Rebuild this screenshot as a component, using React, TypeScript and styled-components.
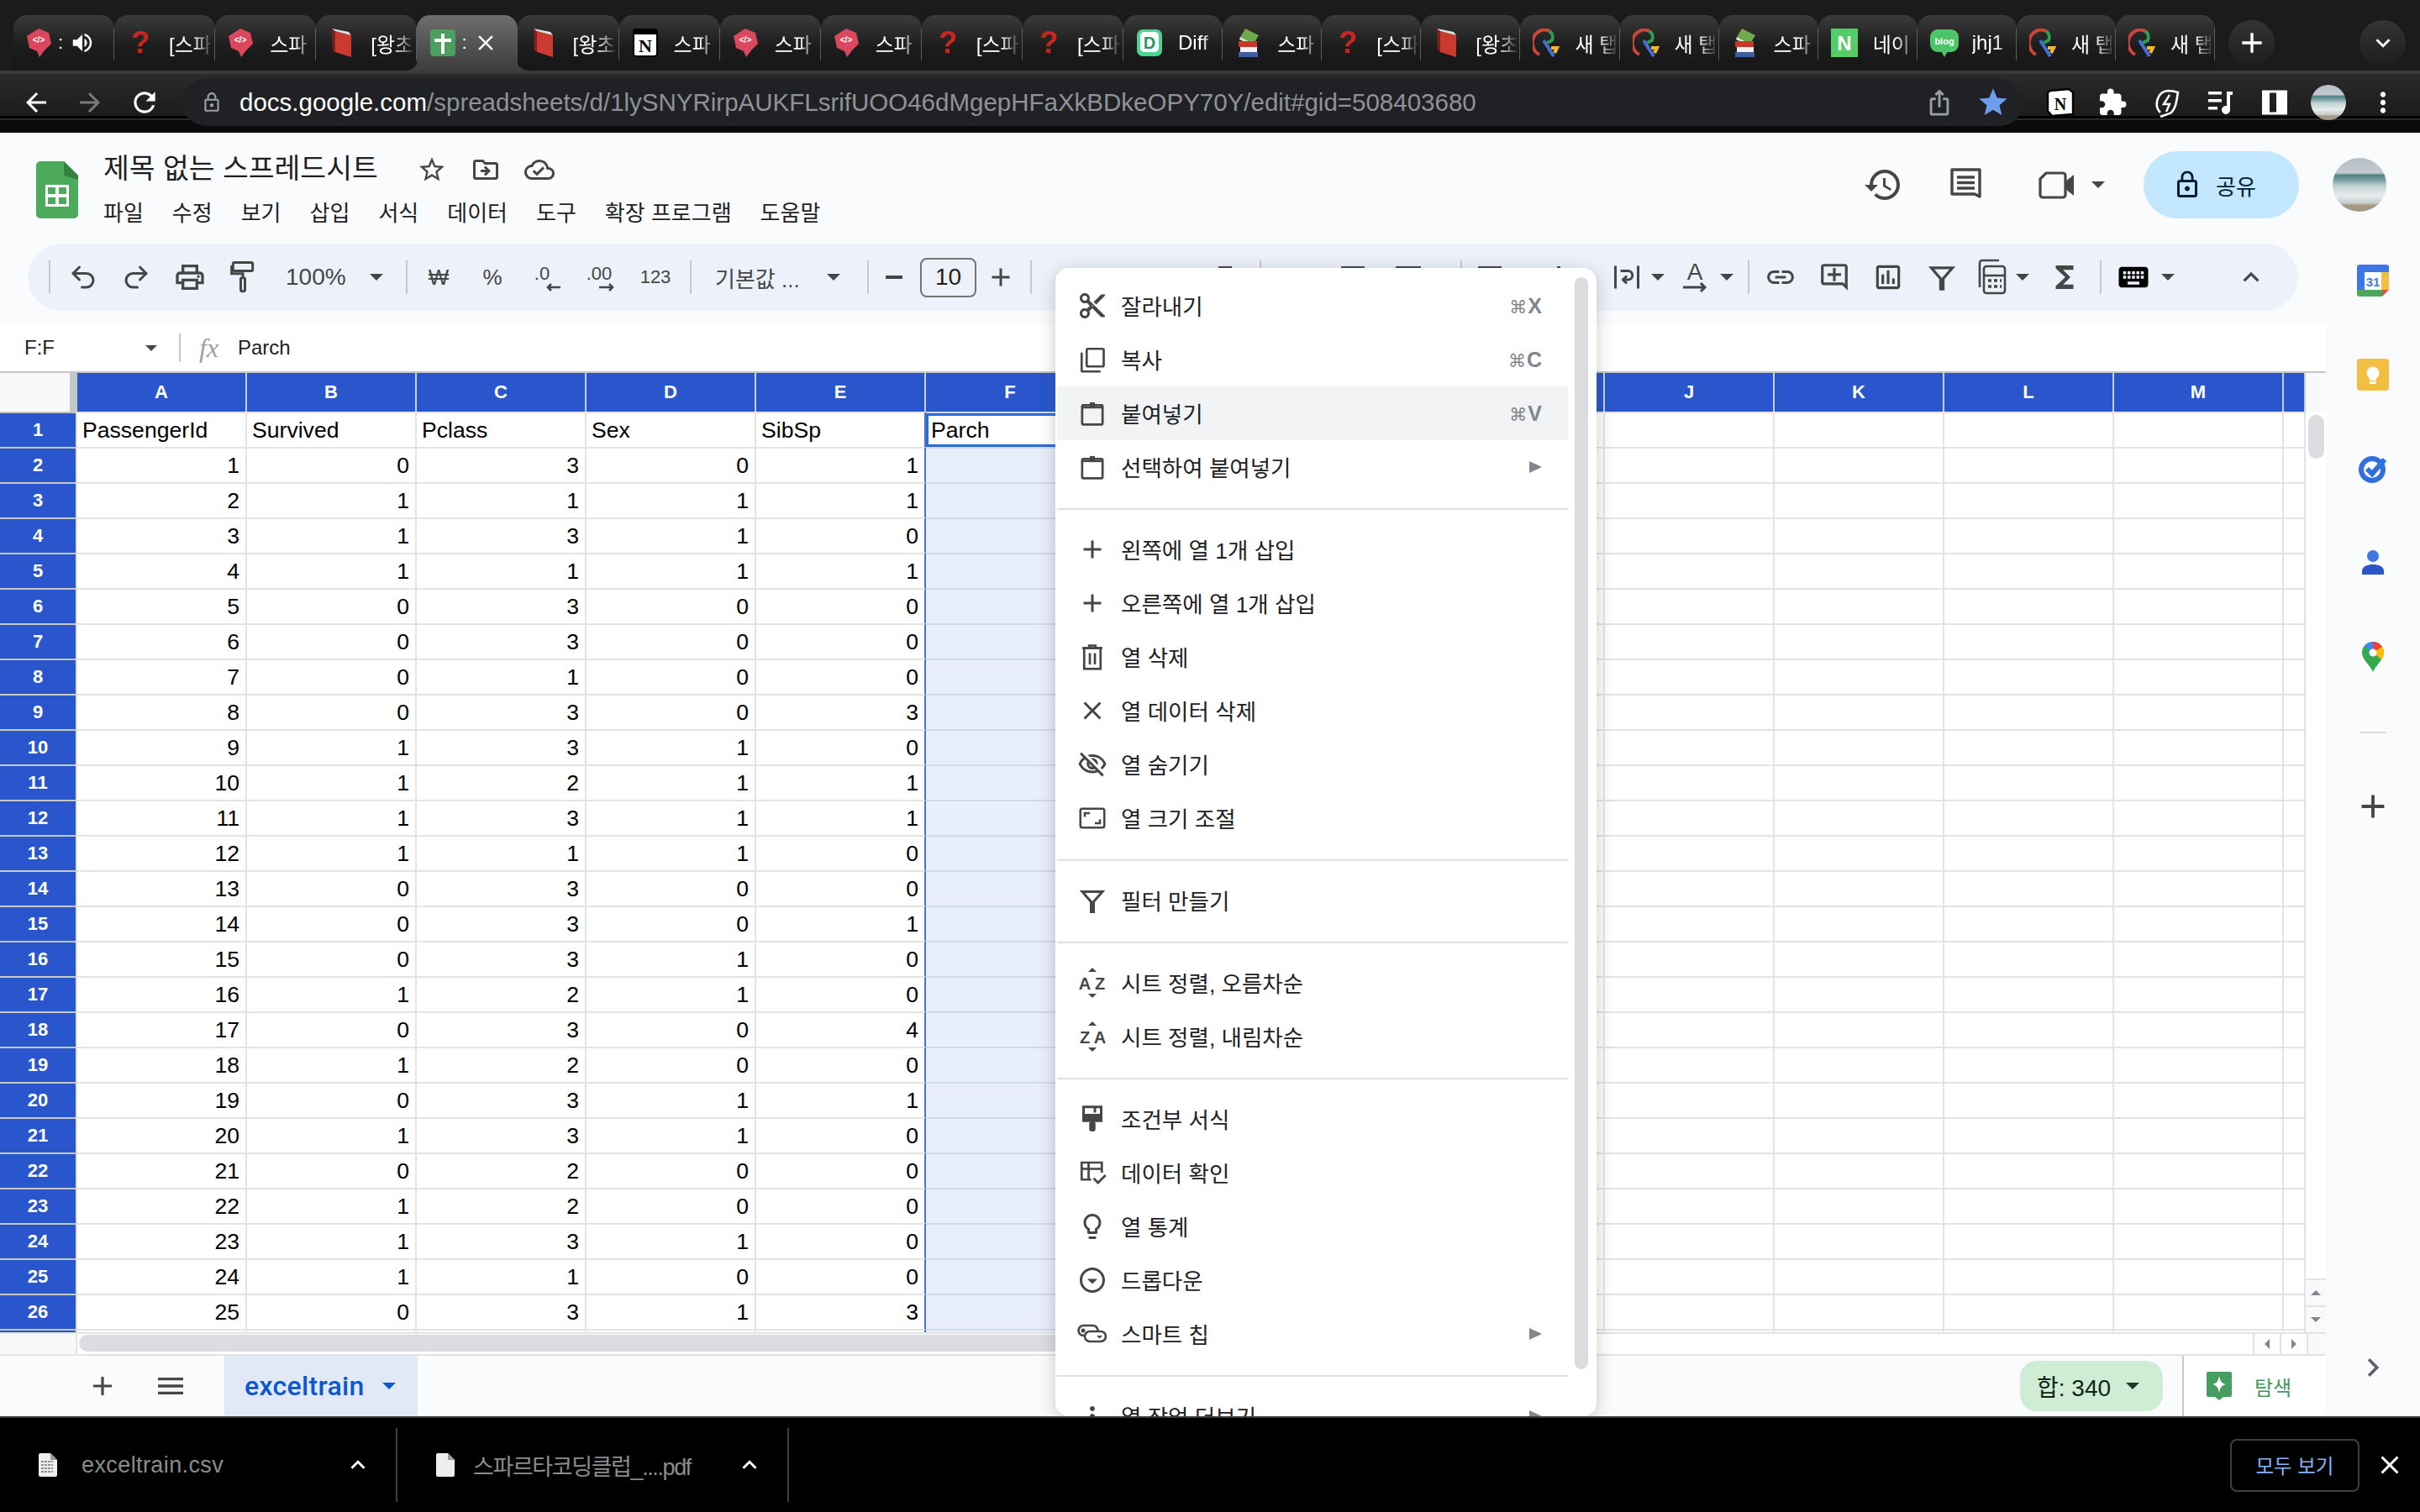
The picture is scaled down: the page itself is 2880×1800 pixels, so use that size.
import React from 'react';
import styled, { createGlobalStyle } from 'styled-components';
import { Undo2, Redo2 } from 'lucide-react';
import {
  MdAdd,
  MdArrowBack,
  MdArrowForward,
  MdClose,
  MdContentCut,
  MdExtension,
  MdFunctions,
  MdHistory,
  MdKeyboard,
  MdKeyboardArrowDown,
  MdKeyboardArrowUp,
  MdLink,
  MdLockOutline,
  MdMenu,
  MdMoreVert,
  MdOutlineAddComment,
  MdOutlineArrowDropDownCircle,
  MdOutlineCloudDone,
  MdOutlineDriveFileMove,
  MdOutlineInsertChart,
  MdOutlineLightbulb,
  MdOutlinePrint,
  MdOutlineVisibilityOff,
  MdChevronRight,
  MdRefresh,
  MdStar,
  MdStarBorder,
  MdIosShare,
  MdVolumeUp,
} from 'react-icons/md';

const FONT = '"Liberation Sans", "Noto Sans CJK KR", sans-serif';

const GlobalStyle = createGlobalStyle`
  html, body {
    margin: 0;
    padding: 0;
    background: #000;
  }
  * {
    box-sizing: border-box;
  }
  body {
    font-family: ${FONT};
  }
`;

type TabInfo = { icon: string; label: string };

const tabs: TabInfo[] = [
  { icon: 'sparta', label: '' },
  { icon: 'question', label: '[스파' },
  { icon: 'sparta', label: '스파' },
  { icon: 'book', label: '[왕초' },
  { icon: 'sheets', label: '' },
  { icon: 'book', label: '[왕초' },
  { icon: 'notion', label: '스파' },
  { icon: 'sparta', label: '스파' },
  { icon: 'sparta', label: '스파' },
  { icon: 'question', label: '[스파' },
  { icon: 'question', label: '[스파' },
  { icon: 'dify', label: 'Diff' },
  { icon: 'books', label: '스파' },
  { icon: 'question', label: '[스파' },
  { icon: 'book', label: '[왕초' },
  { icon: 'ring', label: '새 탭' },
  { icon: 'ring', label: '새 탭' },
  { icon: 'books', label: '스파' },
  { icon: 'naver', label: '네이' },
  { icon: 'blog', label: 'jhj1' },
  { icon: 'ring', label: '새 탭' },
  { icon: 'ring', label: '새 탭' },
];

const columns = ['A', 'B', 'C', 'D', 'E', 'F', 'G', 'H', 'I', 'J', 'K', 'L', 'M'];

const headerRow = ['PassengerId', 'Survived', 'Pclass', 'Sex', 'SibSp', 'Parch'];

const dataRows = [
  [1, 0, 3, 0, 1],
  [2, 1, 1, 1, 1],
  [3, 1, 3, 1, 0],
  [4, 1, 1, 1, 1],
  [5, 0, 3, 0, 0],
  [6, 0, 3, 0, 0],
  [7, 0, 1, 0, 0],
  [8, 0, 3, 0, 3],
  [9, 1, 3, 1, 0],
  [10, 1, 2, 1, 1],
  [11, 1, 3, 1, 1],
  [12, 1, 1, 1, 0],
  [13, 0, 3, 0, 0],
  [14, 0, 3, 0, 1],
  [15, 0, 3, 1, 0],
  [16, 1, 2, 1, 0],
  [17, 0, 3, 0, 4],
  [18, 1, 2, 0, 0],
  [19, 0, 3, 1, 1],
  [20, 1, 3, 1, 0],
  [21, 0, 2, 0, 0],
  [22, 1, 2, 0, 0],
  [23, 1, 3, 1, 0],
  [24, 1, 1, 0, 0],
  [25, 0, 3, 1, 3],
];

function Favicon({ kind }: { kind: string }) {
  switch (kind) {
    case 'sparta':
      return (
        <svg width="32" height="34" viewBox="0 0 32 34">
          <polygon points="15,0 27,5 30,18 22,26 16,34 13,27 4,23 1,9" fill="#d9485c" />
          <text x="15" y="17" fontSize="10" fontWeight="700" fill="#fff" textAnchor="middle" fontFamily="Liberation Sans">
            {'</>'}
          </text>
        </svg>
      );
    case 'question':
      return (
        <svg width="32" height="34" viewBox="0 0 32 34">
          <text x="16" y="29" fontSize="36" fontWeight="700" fill="#c5261f" textAnchor="middle" fontFamily="Liberation Sans">
            ?
          </text>
        </svg>
      );
    case 'book':
      return (
        <svg width="32" height="34" viewBox="0 0 32 34">
          <polygon points="8,3 27,8 27,34 8,28" fill="#cb3a2e" />
          <polygon points="4,0 8,3 8,28 5,26" fill="#7c211b" />
          <polygon points="4,0 24,4 27,8 8,3" fill="#e2e2e2" />
        </svg>
      );
    case 'sheets':
      return (
        <svg width="32" height="34" viewBox="0 0 32 34">
          <rect x="1" y="1" width="30" height="32" rx="4" fill="#4b9f60" />
          <rect x="14" y="6" width="4" height="24" fill="#fff" />
          <rect x="6" y="12" width="20" height="4" fill="#fff" />
        </svg>
      );
    case 'notion':
      return (
        <svg width="32" height="34" viewBox="0 0 32 34">
          <rect x="2" y="1" width="28" height="32" rx="3" fill="#fff" stroke="#000" strokeWidth="2" />
          <rect x="2" y="1" width="28" height="6" fill="#000" />
          <text x="16" y="28" fontSize="22" fontWeight="700" fill="#000" textAnchor="middle" fontFamily="Liberation Serif">
            N
          </text>
        </svg>
      );
    case 'dify':
      return (
        <svg width="32" height="34" viewBox="0 0 32 34">
          <rect x="1" y="1" width="30" height="32" rx="7" fill="#4fd392" />
          <rect x="5" y="4" width="22" height="24" rx="5" fill="#fff" />
          <text x="16" y="24" fontSize="20" fontWeight="700" fill="#1d9c63" textAnchor="middle" fontFamily="Liberation Sans">
            D
          </text>
        </svg>
      );
    case 'books':
      return (
        <svg width="32" height="34" viewBox="0 0 32 34">
          <polygon points="12,0 28,8 22,18 6,10" fill="#6fa84f" />
          <polygon points="6,10 22,18 20,20 5,13" fill="#d8e6c8" />
          <rect x="4" y="15" width="22" height="7" fill="#c8372c" />
          <rect x="6" y="22" width="20" height="6" fill="#f2f2f2" />
          <rect x="4" y="28" width="23" height="6" fill="#3d5f9e" />
        </svg>
      );
    case 'ring':
      return (
        <svg width="32" height="34" viewBox="0 0 32 34" fill="none">
          <path d="M20 3 A9 9 0 0 1 23 14 L17 17" stroke="#2e9e4f" strokeWidth="4" />
          <path d="M20 3 A13 14 0 0 0 8 31" stroke="#d04437" strokeWidth="4" />
          <path d="M13 14 L25 33" stroke="#3f6fd8" strokeWidth="4" />
          <path d="M22 23 h7 l-3 6" stroke="#f2b632" strokeWidth="4" />
        </svg>
      );
    case 'naver':
      return (
        <svg width="32" height="34" viewBox="0 0 32 34">
          <rect x="0" y="0" width="32" height="34" fill="#54cd69" />
          <text x="16" y="26" fontSize="24" fontWeight="700" fill="#fff" textAnchor="middle" fontFamily="Liberation Sans">
            N
          </text>
        </svg>
      );
    default:
      return (
        <svg width="34" height="34" viewBox="0 0 34 34">
          <rect x="0" y="1" width="34" height="27" rx="9" fill="#4dc468" />
          <polygon points="13,27 21,27 17,34" fill="#4dc468" />
          <text x="17" y="19" fontSize="11" fontWeight="700" fill="#fff" textAnchor="middle" fontFamily="Liberation Sans">
            blog
          </text>
        </svg>
      );
  }
}

function SheetsLogo() {
  return (
    <svg width="50" height="68" viewBox="0 0 50 68">
      <path d="M5 0H33L50 17V63a5 5 0 0 1-5 5H5a5 5 0 0 1-5-5V5a5 5 0 0 1 5-5z" fill="#4caa5c" />
      <path d="M33 0L50 17V22L33 17z" fill="#33803f" />
      <rect x="11" y="28" width="28" height="26" fill="#fff" />
      <rect x="14" y="31" width="9" height="8" fill="#4caa5c" />
      <rect x="27" y="31" width="9" height="8" fill="#4caa5c" />
      <rect x="14" y="43" width="9" height="8" fill="#4caa5c" />
      <rect x="27" y="43" width="9" height="8" fill="#4caa5c" />
    </svg>
  );
}

function PaintIcon({ size = 40 }: { size?: number }) {
  return (
    <svg width={size} height={size} viewBox="0 0 24 24" fill="none" stroke="#444746" strokeWidth="1.8">
      <rect x="5" y="1.5" width="14" height="6" rx="1" />
      <path d="M5 4.5H4v5h8v3" />
      <rect x="10.5" y="12.5" width="3" height="9.5" rx="1" />
    </svg>
  );
}

function ClipboardIcon() {
  return (
    <svg width="36" height="36" viewBox="0 0 24 24" fill="none" stroke="#444746" strokeWidth="1.8">
      <rect x="3.9" y="5.5" width="16.2" height="15.4" rx="1" />
      <path d="M4 7.2h16" strokeWidth="1.8" />
      <rect x="10" y="3.3" width="4" height="3.5" fill="#444746" stroke="none" />
    </svg>
  );
}

function CopyIcon() {
  return (
    <svg width="36" height="36" viewBox="0 0 24 24" fill="none" stroke="#444746" strokeWidth="1.8">
      <rect x="7.5" y="3.5" width="13.5" height="14" rx="1" />
      <path d="M3.5 6.5v14a1 1 0 0 0 1 1h14" />
    </svg>
  );
}

function TrashIcon() {
  return (
    <svg width="36" height="36" viewBox="0 0 24 24" fill="none" stroke="#444746" strokeWidth="1.8">
      <path d="M4 5h16M9.5 5V3h5v2" />
      <rect x="5.5" y="5" width="13" height="16.5" />
      <path d="M10 9v9M14 9v9" />
    </svg>
  );
}

function ResizeIcon() {
  return (
    <svg width="36" height="36" viewBox="0 0 24 24" fill="none" stroke="#444746" strokeWidth="1.7">
      <rect x="2.5" y="4.5" width="19" height="15" rx="1.5" />
      <path d="M6 11V8h4M18 13v3h-4" />
    </svg>
  );
}

function FunnelIcon({ size = 36 }: { size?: number }) {
  return (
    <svg width={size} height={size} viewBox="0 0 24 24" fill="none" stroke="#444746" strokeWidth="2">
      <path d="M4 5h16l-7 8v8h-2v-8z" />
    </svg>
  );
}

function SortIcon({ first, second }: { first: string; second: string }) {
  return (
    <svg width="36" height="36" viewBox="0 0 36 36">
      <polygon points="18,0 23,5 13,5" fill="#444746" />
      <polygon points="18,36 23,31 13,31" fill="#444746" />
      <text x="9" y="26" fontSize="20" fontWeight="700" fill="#444746" textAnchor="middle" fontFamily="Liberation Sans">
        {first}
      </text>
      <text x="27" y="26" fontSize="20" fontWeight="700" fill="#444746" textAnchor="middle" fontFamily="Liberation Sans">
        {second}
      </text>
    </svg>
  );
}

function ValidationIcon() {
  return (
    <svg width="36" height="36" viewBox="0 0 24 24" fill="none" stroke="#444746" strokeWidth="1.8">
      <path d="M11 17.5H3.5V4h16v8M3.5 9h16M9 4v13" />
      <path d="M13 16.5l3.5 3.5 6-6" />
    </svg>
  );
}

function ChipIcon() {
  return (
    <svg width="36" height="36" viewBox="0 0 36 36" fill="none" stroke="#444746" strokeWidth="2.6">
      <rect x="1.5" y="8" width="23" height="12" rx="6" />
      <rect x="9" y="15" width="25" height="12" rx="6" fill="#fff" />
      <circle cx="7" cy="14" r="2.5" fill="#444746" stroke="none" />
      <polygon points="23,20 30,20 26.5,23.5" fill="#444746" stroke="none" />
    </svg>
  );
}

function RollerIcon() {
  return (
    <svg width="36" height="36" viewBox="0 0 24 24">
      <path d="M5 2.5h14v11H5z" fill="none" stroke="#444746" strokeWidth="2" />
      <rect x="5" y="8" width="14" height="5.5" fill="#444746" />
      <rect x="13" y="3" width="2" height="4" fill="#444746" />
      <rect x="9.5" y="14" width="5" height="8" rx="2" fill="#444746" />
    </svg>
  );
}

function DecimalIcon({ text, arrow }: { text: string; arrow: string }) {
  return (
    <svg width="44" height="44" viewBox="0 0 44 44" fill="none">
      <text x="22" y="25" fontSize="22" fill="#444746" textAnchor="middle" fontFamily="Liberation Sans">
        {text}
      </text>
      <path d={arrow} stroke="#444746" strokeWidth="2.5" />
    </svg>
  );
}

function WrapIcon() {
  return (
    <svg width="36" height="36" viewBox="0 0 24 24" fill="none" stroke="#444746" strokeWidth="2">
      <path d="M3 3v18M21 3v18" />
      <path d="M7 7h6a3 3 0 0 1 0 7H9m3-3l-3 3 3 3" />
    </svg>
  );
}

function TextColorIcon() {
  return (
    <svg width="36" height="44" viewBox="0 0 36 44" fill="none">
      <text x="17" y="25" fontSize="28" fill="#444746" textAnchor="middle" fontFamily="Liberation Sans">
        A
      </text>
      <path d="M3 34h26m-5-5l5 5-5 5" stroke="#444746" strokeWidth="3" />
    </svg>
  );
}

function CalcIcon() {
  return (
    <svg width="36" height="44" viewBox="0 0 36 44" fill="none" stroke="#444746" strokeWidth="2.6">
      <path d="M4 34V5a3 3 0 0 1 3-3h20" />
      <rect x="9" y="9" width="25" height="32" rx="3" />
      <path d="M9 20h25" />
      <path d="M14 26h4M21 26h4M28 26h2M14 33h4M21 33h4M28 33h2" strokeWidth="3.4" />
    </svg>
  );
}

function CommentListIcon() {
  return (
    <svg width="44" height="44" viewBox="0 0 44 44" fill="none" stroke="#444746" strokeWidth="3.4">
      <path d="M5 4h33v32l-6-3H5z" strokeLinejoin="round" />
      <path d="M11 13h21M11 19.5h21M11 26h21" />
    </svg>
  );
}

function CameraIcon() {
  return (
    <svg width="44" height="44" viewBox="0 0 44 44">
      <path d="M9 8h20a3 3 0 0 1 3 3v23a3 3 0 0 1-3 3H5a3 3 0 0 1-3-3V15z" fill="none" stroke="#444746" strokeWidth="3.2" />
      <polygon points="32,18 42,10 42,35 32,27" fill="#444746" />
    </svg>
  );
}

function NotionMark() {
  return (
    <svg width="34" height="34" viewBox="0 0 34 34">
      <path d="M5 3l22-2 5 4v26l-25 2-5-6V5z" fill="#fff" stroke="#000" strokeWidth="2.4" />
      <text x="17" y="26" fontSize="20" fontWeight="700" fill="#000" textAnchor="middle" fontFamily="Liberation Serif">
        N
      </text>
    </svg>
  );
}

function BoltMark() {
  return (
    <svg width="34" height="36" viewBox="0 0 34 36" fill="none" stroke="#fff" strokeWidth="2.6">
      <path d="M8 30c-8-8-4-25 9-26 5 0 9 1 12 2-2 10-2 18-8 24-3 2-9 3-13 5" />
      <path d="M19 9l-7 11h7l-4 9" strokeWidth="2.4" />
    </svg>
  );
}

function QueueMark() {
  return (
    <svg width="32" height="32" viewBox="0 0 32 32">
      <rect x="1" y="3" width="16" height="3.5" fill="#fff" />
      <rect x="1" y="12" width="16" height="3.5" fill="#fff" />
      <rect x="1" y="21" width="11" height="3.5" fill="#fff" />
      <path d="M23 3h7v4h-3v18a5 5 0 1 1-4-5z" fill="#fff" />
    </svg>
  );
}

function PanelMark() {
  return (
    <svg width="30" height="30" viewBox="0 0 30 30">
      <path d="M1 2h28v26H1z" fill="none" stroke="#fff" strokeWidth="3" />
      <rect x="17" y="2" width="12" height="26" fill="#fff" />
      <rect x="1" y="2" width="8" height="26" fill="#fff" />
    </svg>
  );
}

function CalendarApp() {
  return (
    <svg width="38" height="38" viewBox="0 0 38 38">
      <rect x="0" y="0" width="38" height="38" rx="3" fill="#fff" />
      <path d="M3 0h32a3 3 0 0 1 3 3v6H0V3a3 3 0 0 1 3-3z" fill="#3f78e5" />
      <rect x="0" y="9" width="9" height="21" fill="#3f78e5" />
      <rect x="29" y="9" width="9" height="21" fill="#f2bf42" />
      <path d="M0 30h30v8H3a3 3 0 0 1-3-3z" fill="#4fa55a" />
      <polygon points="30,30 38,30 30,38" fill="#e1503f" />
      <text x="19" y="26" fontSize="15" fontWeight="700" fill="#3f78e5" textAnchor="middle" fontFamily="Liberation Sans">
        31
      </text>
    </svg>
  );
}

function KeepApp() {
  return (
    <svg width="38" height="38" viewBox="0 0 38 38">
      <rect width="38" height="38" rx="4" fill="#f2bf42" />
      <circle cx="19" cy="17" r="7.5" fill="#fff" />
      <rect x="15" y="22" width="8" height="4" fill="#fff" />
      <rect x="15" y="27" width="8" height="3" fill="#fff" />
    </svg>
  );
}

function TasksApp() {
  return (
    <svg width="38" height="38" viewBox="0 0 38 38" fill="none">
      <circle cx="18" cy="20" r="13" stroke="#2f6fe0" strokeWidth="6" />
      <path d="M12 19l6 6L33 8" stroke="#2f6fe0" strokeWidth="6" />
    </svg>
  );
}

function ContactsApp() {
  return (
    <svg width="38" height="38" viewBox="0 0 38 38">
      <circle cx="19" cy="11" r="7" fill="#3f78e5" />
      <path d="M6 33v-4c0-6 7-8 13-8s13 2 13 8v4z" fill="#2a56c6" />
    </svg>
  );
}

function MapsApp() {
  return (
    <svg width="38" height="38" viewBox="0 0 38 38">
      <path d="M19 1a13 13 0 0 1 13 13c0 8-9 14-13 23C15 28 6 22 6 14A13 13 0 0 1 19 1z" fill="#34a853" />
      <path d="M19 1a13 13 0 0 0-10 5l10 8z" fill="#4285f4" />
      <path d="M19 1a13 13 0 0 1 11 6l-11 7z" fill="#ea4335" />
      <path d="M30 7a13 13 0 0 1 2 7c0 3-1 5-3 8l-10-8z" fill="#fbbc04" />
      <circle cx="19" cy="14" r="4.5" fill="#fff" />
    </svg>
  );
}

function ExploreIcon() {
  return (
    <svg width="30" height="34" viewBox="0 0 30 34">
      <path d="M2 0h26a2 2 0 0 1 2 2v26a2 2 0 0 1-2 2h-8l-5 4-5-4H2a2 2 0 0 1-2-2V2a2 2 0 0 1 2-2z" fill="#479c5f" />
      <path d="M15 5c1 6 3 9 8 10-5 1-7 4-8 10-1-6-3-9-8-10 5-1 7-4 8-10z" fill="#fff" />
    </svg>
  );
}

function FileIcon({ lines }: { lines?: boolean }) {
  return (
    <svg width="22" height="28" viewBox="0 0 22 28">
      <path d="M2 0h12l8 8v18a2 2 0 0 1-2 2H2a2 2 0 0 1-2-2V2a2 2 0 0 1 2-2z" fill="#eeeeee" />
      <path d="M14 0l8 8h-8z" fill="#9a9a9a" />
      {lines && <path d="M3 10h14M3 14h14M3 18h14M3 22h14" stroke="#8e8e8e" strokeWidth="2" strokeDasharray="3 1" />}
    </svg>
  );
}

type MenuItemInfo = {
  icon: React.ReactNode;
  label: string;
  hint?: string;
  sub?: boolean;
  hover?: boolean;
};

const menuGroups: MenuItemInfo[][] = [
  [
    { icon: <MdContentCut size={36} />, label: '잘라내기', hint: 'X' },
    { icon: <CopyIcon />, label: '복사', hint: 'C' },
    { icon: <ClipboardIcon />, label: '붙여넣기', hint: 'V', hover: true },
    { icon: <ClipboardIcon />, label: '선택하여 붙여넣기', sub: true },
  ],
  [
    { icon: <MdAdd size={36} />, label: '왼쪽에 열 1개 삽입' },
    { icon: <MdAdd size={36} />, label: '오른쪽에 열 1개 삽입' },
    { icon: <TrashIcon />, label: '열 삭제' },
    { icon: <MdClose size={36} />, label: '열 데이터 삭제' },
    { icon: <MdOutlineVisibilityOff size={36} />, label: '열 숨기기' },
    { icon: <ResizeIcon />, label: '열 크기 조절' },
  ],
  [{ icon: <FunnelIcon />, label: '필터 만들기' }],
  [
    { icon: <SortIcon first="A" second="Z" />, label: '시트 정렬, 오름차순' },
    { icon: <SortIcon first="Z" second="A" />, label: '시트 정렬, 내림차순' },
  ],
  [
    { icon: <RollerIcon />, label: '조건부 서식' },
    { icon: <ValidationIcon />, label: '데이터 확인' },
    { icon: <MdOutlineLightbulb size={36} />, label: '열 통계' },
    { icon: <MdOutlineArrowDropDownCircle size={36} />, label: '드롭다운' },
    { icon: <ChipIcon />, label: '스마트 칩', sub: true },
  ],
  [{ icon: <MdMoreVert size={36} />, label: '열 작업 더보기', sub: true }],
];

export default function App() {
  return (
    <Screen>
      <GlobalStyle />
      <Chrome>
        <TabStrip>
          {tabs.map((tab, index) => (
            <Tab key={index} $active={index === 4} $wide={index < 11}>
              <TabIcon>
                <Favicon kind={tab.icon} />
              </TabIcon>
              {index === 0 && (
                <>
                  <TabDots>:</TabDots>
                  <MdVolumeUp size={30} color="#fff" />
                </>
              )}
              {index === 4 && (
                <>
                  <TabDots>:</TabDots>
                  <TabClose>
                    <MdClose size={30} color="#fff" />
                  </TabClose>
                </>
              )}
              {tab.label && <TabLabel>{tab.label}</TabLabel>}
            </Tab>
          ))}
          <RoundButton $ml={16}>
            <MdAdd size={40} color="#fff" />
          </RoundButton>
          <RoundButton $ml={101}>
            <MdKeyboardArrowDown size={34} color="#fff" />
          </RoundButton>
        </TabStrip>
        <UrlRow>
          <Slot $w={56} $ml={15}>
            <MdArrowBack size={36} color="#fff" />
          </Slot>
          <Slot $w={56} $ml={8}>
            <MdArrowForward size={36} color="#77797c" />
          </Slot>
          <Slot $w={56} $ml={9}>
            <MdRefresh size={38} color="#fff" />
          </Slot>
          <AddressBar>
            <Slot $w={26}>
              <MdLockOutline size={26} color="#9aa0a6" />
            </Slot>
            <UrlText>
              <strong>docs.google.com</strong>
              /spreadsheets/d/1lySNYRirpAUKFLsrifUOO46dMgepHFaXkBDkeOPY70Y/edit#gid=508403680
            </UrlText>
            <Slot $w={44} $auto>
              <MdIosShare size={34} color="#9aa0a6" />
            </Slot>
            <Slot $w={44} $ml={20}>
              <MdStar size={40} color="#6d9eeb" />
            </Slot>
          </AddressBar>
          <Slot $w={48} $ml={20}>
            <NotionMark />
          </Slot>
          <Slot $w={48} $ml={14}>
            <MdExtension size={36} color="#fff" />
          </Slot>
          <Slot $w={48} $ml={18}>
            <BoltMark />
          </Slot>
          <Slot $w={48} $ml={15}>
            <QueueMark />
          </Slot>
          <Slot $w={48} $ml={16}>
            <PanelMark />
          </Slot>
          <Avatar $size={42} $ml={19} />
          <Slot $w={48} $ml={20}>
            <MdMoreVert size={38} color="#fff" />
          </Slot>
        </UrlRow>
      </Chrome>

      <Page>
        <DocHeader>
          <SheetsLogo />
          <TitleBlock>
            <TitleRow>
              <DocTitle>제목 없는 스프레드시트</DocTitle>
              <Slot $w={48} $ml={41}>
                <MdStarBorder size={36} color="#444746" />
              </Slot>
              <Slot $w={48} $ml={16}>
                <MdOutlineDriveFileMove size={36} color="#444746" />
              </Slot>
              <Slot $w={48} $ml={16}>
                <MdOutlineCloudDone size={36} color="#444746" />
              </Slot>
            </TitleRow>
            <MenuBar>
              {['파일', '수정', '보기', '삽입', '서식', '데이터', '도구', '확장 프로그램', '도움말'].map((m) => (
                <span key={m}>{m}</span>
              ))}
            </MenuBar>
          </TitleBlock>
          <HeaderActions>
            <Slot $w={64}>
              <MdHistory size={48} color="#444746" />
            </Slot>
            <Slot $w={64} $ml={35}>
              <CommentListIcon />
            </Slot>
            <Slot $w={64} $ml={44}>
              <CameraIcon />
            </Slot>
            <Slot $w={34}>
              <Caret $size={8} />
            </Slot>
            <ShareButton>
              <MdLockOutline size={36} />
              공유
            </ShareButton>
            <Avatar $size={64} $ml={40} />
          </HeaderActions>
        </DocHeader>

        <Body>
          <Main>
            <Toolbar>
              <ToolSep />
              <Slot $w={63.5} $ml={7}>
                <Undo2 size={36} color="#444746" strokeWidth={2} />
              </Slot>
              <Slot $w={63.5}>
                <Redo2 size={36} color="#444746" strokeWidth={2} />
              </Slot>
              <Slot $w={63.5}>
                <MdOutlinePrint size={40} color="#444746" />
              </Slot>
              <Slot $w={63.5}>
                <PaintIcon />
              </Slot>
              <ToolText $w={73} $ml={19} $size={28}>
                100%
              </ToolText>
              <Slot $w={70}>
                <Caret $size={8} />
              </Slot>
              <ToolSep />
              <ToolText $w={64} $ml={5} $size={26} $center>
                ₩
              </ToolText>
              <ToolText $w={64} $size={26} $center>
                %
              </ToolText>
              <Slot $w={54}>
                <DecimalIcon text=".0" arrow="M44 34H29m4-4l-4 4 4 4" />
              </Slot>
              <Slot $w={82}>
                <DecimalIcon text=".00" arrow="M22 34h16m-4-4l4 4-4 4" />
              </Slot>
              <ToolText $w={52} $size={22} $center>
                123
              </ToolText>
              <Spacer $w={15} />
              <ToolSep />
              <ToolText $w={101} $ml={28} $size={26}>
                기본값 ...
              </ToolText>
              <Slot $w={80}>
                <Caret $size={8} />
              </Slot>
              <ToolSep />
              <Slot $w={60}>
                <MinusBar />
              </Slot>
              <FontSizeBox>10</FontSizeBox>
              <Slot $w={58}>
                <MdAdd size={36} color="#444746" />
              </Slot>
              <Spacer $w={6} />
              <ToolSep />
              <Spacer $w={222} />
              <HiddenStub $w={16} />
              <Spacer $w={33} />
              <ToolSep />
              <Spacer $w={95} />
              <HiddenStub $w={28} />
              <Spacer $w={37} />
              <HiddenStub $w={30} />
              <Spacer $w={47} />
              <ToolSep />
              <Spacer $w={19} />
              <HiddenStub $w={28} />
              <Spacer $w={66} />
              <HiddenStub $w={4} />
              <Spacer $w={57} />
              <Slot $w={44}>
                <WrapIcon />
              </Slot>
              <Slot $w={30}>
                <Caret $size={8} />
              </Slot>
              <Slot $w={44} $ml={8}>
                <TextColorIcon />
              </Slot>
              <Slot $w={30}>
                <Caret $size={8} />
              </Slot>
              <Spacer $w={10} />
              <ToolSep />
              <Slot $w={64} $ml={5}>
                <MdLink size={38} color="#444746" />
              </Slot>
              <Slot $w={64}>
                <MdOutlineAddComment size={38} color="#444746" />
              </Slot>
              <Slot $w={64}>
                <MdOutlineInsertChart size={38} color="#444746" />
              </Slot>
              <Slot $w={64}>
                <FunnelIcon size={38} />
              </Slot>
              <Slot $w={50} $ml={2}>
                <CalcIcon />
              </Slot>
              <Slot $w={24}>
                <Caret $size={8} />
              </Slot>
              <Slot $w={64} $ml={6}>
                <MdFunctions size={42} color="#444746" />
              </Slot>
              <Spacer $w={10} />
              <ToolSep />
              <Slot $w={48} $ml={14}>
                <MdKeyboard size={42} color="#000" />
              </Slot>
              <Slot $w={34}>
                <Caret $size={8} />
              </Slot>
              <Slot $w={48} $ml={58}>
                <MdKeyboardArrowUp size={38} color="#444746" />
              </Slot>
            </Toolbar>

            <FormulaBar>
              <NameBox>F:F</NameBox>
              <Slot $w={34} $ml={101}>
                <Caret $size={7} />
              </Slot>
              <FormulaSep />
              <FxMark>fx</FxMark>
              <FormulaValue>Parch</FormulaValue>
            </FormulaBar>

            <GridArea>
              <Sheet>
                <Corner />
                {columns.map((c) => (
                  <ColHead key={c}>{c}</ColHead>
                ))}
                <ColHead />
                {Array.from({ length: 26 }).map((_, r) => {
                  const row = r === 0 ? headerRow : (dataRows[r - 1] as (string | number)[]);
                  return (
                    <React.Fragment key={r}>
                      <RowHead>{r + 1}</RowHead>
                      {columns.map((c, ci) => {
                        const v = ci < 5 ? row[ci] : undefined;
                        return (
                          <Cell
                            key={c}
                            $num={r > 0}
                            $sel={ci === 5}
                            $active={r === 0 && ci === 5}
                            $beforeSel={ci === 4}
                          >
                            {r === 0 && ci === 5 ? 'Parch' : v}
                          </Cell>
                        );
                      })}
                      <Cell />
                    </React.Fragment>
                  );
                })}
                <RowHead />
                {columns.map((c, ci) => (
                  <Cell key={c} $sel={ci === 5} $beforeSel={ci === 4} />
                ))}
                <Cell />
              </Sheet>
              <VScroll>
                <VScrollHead />
                <VThumb />
                <VArrow $top>
                  <Caret $size={6} $dir="up" $color="#80868b" />
                </VArrow>
                <VArrow>
                  <Caret $size={6} $color="#80868b" />
                </VArrow>
              </VScroll>
            </GridArea>

            <HScroll>
              <HScrollCorner />
              <HThumb />
              <HArrow $first>
                <Caret $size={6} $dir="left" $color="#80868b" />
              </HArrow>
              <HArrow>
                <Caret $size={6} $dir="right" $color="#80868b" />
              </HArrow>
              <HScrollEnd />
            </HScroll>

            <SheetBar>
              <Slot $w={44} $ml={100}>
                <MdAdd size={38} color="#444746" />
              </Slot>
              <Slot $w={44} $ml={37}>
                <MdMenu size={40} color="#444746" />
              </Slot>
              <SheetTab>
                exceltrain
                <Caret $size={8} $color="#0b57d0" />
              </SheetTab>
              <SumPill>
                합: 340
                <Caret $size={8} $color="#1e3a26" />
              </SumPill>
              <ExploreBox>
                <ExploreIcon />
                <ExploreText>탐색</ExploreText>
              </ExploreBox>
            </SheetBar>
          </Main>

          <SidePanel>
            <CalendarApp />
            <KeepApp />
            <TasksApp />
            <ContactsApp />
            <MapsApp />
            <SideRule />
            <SidePlus>
              <MdAdd size={46} color="#444746" />
            </SidePlus>
            <SideChevron>
              <MdChevronRight size={44} color="#5f6368" />
            </SideChevron>
          </SidePanel>
        </Body>

        <ContextMenu>
          <MenuThumb />
          {menuGroups.map((group, gi) => (
            <MenuGroup key={gi} $first={gi === 0}>
              {group.map((item) => (
                <MenuRow key={item.label} $hover={item.hover}>
                  <MenuIcon>{item.icon}</MenuIcon>
                  <MenuLabel>{item.label}</MenuLabel>
                  {item.hint && (
                    <Shortcut>
                      <span>⌘</span>
                      {item.hint}
                    </Shortcut>
                  )}
                  {item.sub && <SubArrow />}
                </MenuRow>
              ))}
            </MenuGroup>
          ))}
        </ContextMenu>
      </Page>

      <DownloadBar>
        <DownloadItem $w={473}>
          <FileIcon lines />
          <DownloadName>exceltrain.csv</DownloadName>
          <DownloadCaret>
            <MdKeyboardArrowUp size={34} color="#fff" />
          </DownloadCaret>
        </DownloadItem>
        <DownloadItem $w={466}>
          <FileIcon />
          <DownloadName $tight>스파르타코딩클럽_....pdf</DownloadName>
          <DownloadCaret>
            <MdKeyboardArrowUp size={34} color="#fff" />
          </DownloadCaret>
        </DownloadItem>
        <ShowAll>모두 보기</ShowAll>
        <Slot $w={48} $ml={12}>
          <MdClose size={36} color="#fff" />
        </Slot>
      </DownloadBar>
    </Screen>
  );
}

const Screen = styled.div`
  width: 2880px;
  height: 1800px;
  display: flex;
  flex-direction: column;
  overflow: hidden;
`;

const Slot = styled.div<{ $w: number; $ml?: number; $auto?: boolean }>`
  flex: none;
  width: ${(p) => p.$w}px;
  margin-left: ${(p) => (p.$auto ? 'auto' : `${p.$ml || 0}px`)};
  display: flex;
  align-items: center;
  justify-content: center;
`;

const Spacer = styled.div<{ $w: number }>`
  flex: none;
  width: ${(p) => p.$w}px;
`;

const Caret = styled.span<{ $size: number; $color?: string; $dir?: 'up' | 'left' | 'right' }>`
  display: inline-block;
  width: 0;
  height: 0;
  flex: none;
  border-style: solid;
  border-color: transparent;
  ${(p) => {
    const c = p.$color || '#444746';
    const s = p.$size;
    if (p.$dir === 'up') return `border-width: 0 ${s}px ${s}px; border-bottom-color: ${c};`;
    if (p.$dir === 'left') return `border-width: ${s}px ${s}px ${s}px 0; border-right-color: ${c};`;
    if (p.$dir === 'right') return `border-width: ${s}px 0 ${s}px ${s}px; border-left-color: ${c};`;
    return `border-width: ${s}px ${s}px 0; border-top-color: ${c};`;
  }}
`;

const Chrome = styled.div`
  flex: none;
  height: 158px;
  background: #1b1b1b;
`;

const TabStrip = styled.div`
  height: 84px;
  display: flex;
  padding-left: 16px;
  background: #1b1b1b;
`;

const Tab = styled.div<{ $active?: boolean; $wide?: boolean }>`
  flex: none;
  width: ${(p) => (p.$wide ? 120.1 : 118.1)}px;
  height: 66px;
  margin-top: 18px;
  padding-left: 15px;
  display: flex;
  align-items: center;
  position: relative;
  z-index: ${(p) => (p.$active ? 1 : 0)};
  border-radius: 16px 16px 0 0;
  background: ${(p) =>
    p.$active ? 'linear-gradient(#6e6e6e, #3c3c3c)' : 'linear-gradient(#3b3b3b 0, #1d1d1d 55%, #161616 100%)'};
  &::after {
    content: '';
    position: absolute;
    right: 0;
    top: 15px;
    height: 39px;
    width: 1px;
    background: ${(p) => (p.$active ? 'transparent' : '#5c5c5c')};
  }
  ${(p) =>
    p.$active &&
    `&::before {
      content: '';
      position: absolute;
      left: -12px;
      right: -12px;
      bottom: 0;
      height: 14px;
      background:
        radial-gradient(circle at 0 0, transparent 13px, #3f3f3f 14px) left / 12px 14px no-repeat,
        radial-gradient(circle at 100% 0, transparent 13px, #3f3f3f 14px) right / 12px 14px no-repeat;
    }`}
`;

const TabIcon = styled.div`
  flex: none;
  width: 32px;
  height: 34px;
`;

const TabDots = styled.span`
  margin: 0 8px 0 6px;
  color: #fff;
  font-size: 22px;
`;

const TabClose = styled.span`
  display: flex;
  margin-left: -1px;
`;

const TabLabel = styled.span`
  flex: 1;
  min-width: 0;
  margin-left: 18px;
  margin-right: 2px;
  overflow: hidden;
  white-space: nowrap;
  color: #fff;
  font-size: 24px;
  -webkit-mask-image: linear-gradient(to right, #000 55%, transparent 100%);
  mask-image: linear-gradient(to right, #000 55%, transparent 100%);
`;

const RoundButton = styled.div<{ $ml: number }>`
  flex: none;
  width: 55px;
  height: 54px;
  margin-top: 24px;
  margin-left: ${(p) => p.$ml}px;
  border-radius: 50%;
  background: linear-gradient(#343434, #1e1e1e);
  display: flex;
  align-items: center;
  justify-content: center;
`;

const UrlRow = styled.div`
  height: 74px;
  display: flex;
  align-items: center;
  padding-top: 2px;
  background: linear-gradient(
    #3a3a3a 0,
    #3a3a3a 4px,
    #2a2a2a 4px,
    #1c1c1c 54px,
    #000 54px,
    #000 57px,
    #2a2a2a 57px,
    #2a2a2a 59px,
    #0a0a0a 59px,
    #0a0a0a 100%
  );
`;

const AddressBar = styled.div`
  flex: none;
  width: 2191px;
  height: 56px;
  margin-left: 17px;
  padding: 0 14px 0 22px;
  display: flex;
  align-items: center;
  border-radius: 28px;
  background: #202124;
`;

const UrlText = styled.div`
  margin-left: 20px;
  color: #8f9296;
  font-size: 29.5px;
  white-space: nowrap;
  strong {
    color: #fff;
    font-weight: 400;
  }
`;

const Avatar = styled.div<{ $size: number; $ml: number }>`
  flex: none;
  width: ${(p) => p.$size}px;
  height: ${(p) => p.$size}px;
  margin-left: ${(p) => p.$ml}px;
  border-radius: 50%;
  background: linear-gradient(
    #b7bec5 0,
    #c4cad0 28%,
    #4f8385 32%,
    #7fa3a6 42%,
    #c3d2d4 52%,
    #e7eceb 70%,
    #c7cdcd 84%,
    #a99a88 88%,
    #a49583 100%
  );
`;

const Page = styled.div`
  flex: none;
  height: 1528px;
  position: relative;
  display: flex;
  flex-direction: column;
  overflow: hidden;
  background: #f9fbfd;
`;

const DocHeader = styled.div`
  flex: none;
  height: 132px;
  padding: 34px 40px 0 43px;
  display: flex;
  align-items: flex-start;
`;

const TitleBlock = styled.div`
  margin-left: 30px;
  margin-top: -14px;
  display: flex;
  flex-direction: column;
`;

const TitleRow = styled.div`
  height: 48px;
  display: flex;
  align-items: center;
`;

const DocTitle = styled.div`
  width: 326px;
  margin-bottom: 10px;
  color: #1f1f1f;
  font-size: 33.5px;
  white-space: nowrap;
`;

const MenuBar = styled.div`
  margin-top: 8px;
  display: flex;
  gap: 34px;
  color: #1f1f1f;
  font-size: 26px;
  line-height: 40px;
  white-space: nowrap;
`;

const HeaderActions = styled.div`
  margin-left: auto;
  margin-top: -12px;
  height: 80px;
  display: flex;
  align-items: center;
`;

const ShareButton = styled.div`
  flex: none;
  width: 185px;
  height: 80px;
  margin-left: 37px;
  padding-left: 34px;
  display: flex;
  align-items: center;
  gap: 16px;
  border-radius: 40px;
  background: #c2e7ff;
  color: #001d35;
  font-size: 26px;
`;

const Body = styled.div`
  flex: 1;
  min-height: 0;
  display: flex;
`;

const Main = styled.div`
  flex: none;
  width: 2768px;
  display: flex;
  flex-direction: column;
`;

const Toolbar = styled.div`
  flex: none;
  width: 2702px;
  height: 80px;
  margin-left: 33px;
  padding-left: 25px;
  display: flex;
  align-items: center;
  border-radius: 40px;
  background: #edf2fa;
`;

const ToolSep = styled.div`
  flex: none;
  width: 2px;
  height: 40px;
  background: #c7c7c7;
`;

const ToolText = styled.div<{ $w: number; $ml?: number; $size: number; $center?: boolean }>`
  flex: none;
  width: ${(p) => p.$w}px;
  margin-left: ${(p) => p.$ml || 0}px;
  color: #444746;
  font-size: ${(p) => p.$size}px;
  text-align: ${(p) => (p.$center ? 'center' : 'left')};
  white-space: nowrap;
`;

const MinusBar = styled.div`
  width: 20px;
  height: 4px;
  background: #444746;
`;

const FontSizeBox = styled.div`
  flex: none;
  width: 67px;
  height: 47px;
  margin-left: 1px;
  display: flex;
  align-items: center;
  justify-content: center;
  border: 2px solid #747775;
  border-radius: 8px;
  color: #1f1f1f;
  font-size: 28px;
`;

const HiddenStub = styled.div<{ $w: number }>`
  flex: none;
  width: ${(p) => p.$w}px;
  height: 26px;
  background: #444746;
`;

const FormulaBar = styled.div`
  flex: none;
  height: 56px;
  margin-top: 16px;
  padding-left: 29px;
  display: flex;
  align-items: center;
  background: #fff;
`;

const NameBox = styled.div`
  width: 33px;
  color: #1f1f1f;
  font-size: 24px;
`;

const FormulaSep = styled.div`
  flex: none;
  width: 2px;
  height: 34px;
  margin-left: 16px;
  background: #c7c7c7;
`;

const FxMark = styled.div`
  width: 28px;
  margin-left: 22px;
  color: #9aa0a6;
  font-family: 'Liberation Serif', serif;
  font-style: italic;
  font-size: 32px;
`;

const FormulaValue = styled.div`
  margin-left: 18px;
  color: #1f1f1f;
  font-size: 24px;
`;

const GridArea = styled.div`
  flex: none;
  height: 1144px;
  display: flex;
  border-top: 2px solid #c4c7c5;
`;

const Sheet = styled.div`
  flex: none;
  width: 2744px;
  display: grid;
  grid-template-columns: 92px repeat(13, 202px) 26px;
  grid-template-rows: 46px repeat(26, 42px) 4px;
  background: #fff;
`;

const Corner = styled.div`
  background: #f8f9fa;
  border-right: 9px solid #c4c7c5;
`;

const ColHead = styled.div`
  display: flex;
  align-items: center;
  justify-content: center;
  background: #2956cc;
  border-right: 2px solid #c9cdd6;
  color: #fff;
  font-size: 22px;
  font-weight: 700;
`;

const RowHead = styled.div`
  display: flex;
  align-items: center;
  justify-content: center;
  background: #2956cc;
  border-top: 2px solid #c4c7c5;
  border-right: 2px solid #e2e3e3;
  color: #fff;
  font-size: 22px;
  font-weight: 700;
`;

const Cell = styled.div<{ $num?: boolean; $sel?: boolean; $active?: boolean; $beforeSel?: boolean }>`
  display: flex;
  align-items: center;
  justify-content: ${(p) => (p.$num ? 'flex-end' : 'flex-start')};
  padding: 0 7px 0 6px;
  background: ${(p) => (p.$active ? '#fff' : p.$sel ? '#e8eefa' : '#fff')};
  border-top: 2px solid ${(p) => (p.$sel ? '#d2d9e8' : '#e2e3e3')};
  border-right: 2px solid ${(p) => (p.$beforeSel ? '#4a72c8' : p.$sel ? '#d2d9e8' : '#e2e3e3')};
  color: #000;
  font-size: 26.6px;
  white-space: nowrap;
  overflow: hidden;
  ${(p) => p.$active && 'box-shadow: inset 0 0 0 3px #2a6ae0;'}
`;

const VScroll = styled.div`
  flex: 1;
  display: flex;
  flex-direction: column;
  background: #fff;
`;

const VScrollHead = styled.div`
  height: 46px;
  background: #f8f9fa;
`;

const VThumb = styled.div`
  width: 19px;
  height: 52px;
  margin: 4px 0 0 3px;
  border-radius: 10px;
  background: #dadce0;
`;

const VArrow = styled.div<{ $top?: boolean }>`
  height: 32px;
  ${(p) => p.$top && 'margin-top: auto;'}
  display: flex;
  align-items: center;
  justify-content: center;
  background: #f8f9fa;
  border-top: 2px solid #e2e3e3;
`;

const HScroll = styled.div`
  flex: none;
  height: 26px;
  display: flex;
  background: #fff;
  border-top: 2px solid #e2e3e3;
`;

const HScrollCorner = styled.div`
  flex: none;
  width: 92px;
  background: #f8f9fa;
  border-right: 2px solid #e2e3e3;
`;

const HThumb = styled.div`
  flex: none;
  width: 1300px;
  height: 20px;
  margin: 1px 0 0 2px;
  border-radius: 10px;
  background: #dadce0;
`;

const HArrow = styled.div<{ $first?: boolean }>`
  flex: none;
  width: 32px;
  margin-left: ${(p) => (p.$first ? 1287 : 0)}px;
  display: flex;
  align-items: center;
  justify-content: center;
  border-left: 2px solid #e2e3e3;
`;

const HScrollEnd = styled.div`
  flex: none;
  width: 23px;
  background: #f8f9fa;
  border-left: 2px solid #e2e3e3;
`;

const SheetBar = styled.div`
  flex: 1;
  display: flex;
  align-items: center;
  border-top: 2px solid #e2e3e3;
`;

const SheetTab = styled.div`
  flex: none;
  width: 230px;
  height: 100%;
  margin-left: 42px;
  padding-left: 24px;
  display: flex;
  align-items: center;
  gap: 21px;
  background: #e1e9f7;
  color: #0b57d0;
  font-family: Roboto, sans-serif;
  font-weight: 500;
  font-size: 32px;
  letter-spacing: 0.3px;
`;

const SumPill = styled.div`
  flex: none;
  width: 170px;
  height: 60px;
  margin-left: auto;
  padding-left: 20px;
  display: flex;
  align-items: center;
  gap: 18px;
  border-radius: 20px;
  background: #cfedd4;
  color: #0f2415;
  font-size: 28px;
`;

const ExploreBox = styled.div`
  flex: none;
  width: 171px;
  height: 100%;
  margin-left: 23px;
  padding-left: 27px;
  display: flex;
  align-items: center;
  background: #fff;
  border-left: 2px solid #c7c7c7;
`;

const ExploreText = styled.span`
  margin-left: 27px;
  color: #3f9a5c;
  font-size: 24px;
`;

const SidePanel = styled.div`
  flex: 1;
  padding: 25px 0 36px;
  display: flex;
  flex-direction: column;
  align-items: center;
  gap: 74px;
`;

const SideRule = styled.div`
  width: 32px;
  height: 2px;
  margin: -4px 0 0;
  background: #dadce0;
`;

const SidePlus = styled.div`
  display: flex;
  margin: -10px 0 0;
`;

const SideChevron = styled.div`
  display: flex;
  margin-top: auto;
`;

const ContextMenu = styled.div`
  position: absolute;
  left: 1256px;
  top: 161px;
  width: 644px;
  height: 1367px;
  padding: 13px 34px 0 2px;
  overflow: hidden;
  border-radius: 16px;
  background: #fff;
  box-shadow: 0 4px 20px rgba(60, 64, 67, 0.28);
`;

const MenuThumb = styled.div`
  position: absolute;
  right: 10px;
  top: 11px;
  width: 16px;
  height: 1300px;
  border-radius: 8px;
  background: #dadce0;
`;

const MenuGroup = styled.div<{ $first?: boolean }>`
  ${(p) => !p.$first && 'margin-top: 17px; padding-top: 15px; border-top: 2px solid #e0e0e0;'}
`;

const MenuRow = styled.div<{ $hover?: boolean }>`
  height: 64px;
  padding: 0 31px 0 24px;
  display: flex;
  align-items: center;
  background: ${(p) => (p.$hover ? '#f1f3f4' : 'transparent')};
`;

const MenuIcon = styled.div`
  flex: none;
  width: 36px;
  height: 36px;
  display: flex;
  align-items: center;
  justify-content: center;
  color: #444746;
`;

const MenuLabel = styled.div`
  margin-left: 16px;
  margin-bottom: 2px;
  color: #202124;
  font-size: 26.5px;
  white-space: nowrap;
`;

const Shortcut = styled.div`
  margin-left: auto;
  color: #80868b;
  font-size: 25px;
  font-weight: 700;
  span {
    font-family: 'DejaVu Sans', sans-serif;
    font-size: 21px;
    font-weight: 400;
    margin-right: 1px;
  }
`;

const SubArrow = styled.div`
  margin-left: auto;
  width: 0;
  height: 0;
  border-style: solid;
  border-width: 7px 0 7px 15px;
  border-color: transparent transparent transparent #80868b;
`;

const DownloadBar = styled.div`
  flex: none;
  height: 114px;
  padding-right: 12px;
  display: flex;
  align-items: center;
  background: #000;
  border-top: 2px solid #3c3c3c;
`;

const DownloadItem = styled.div<{ $w: number }>`
  flex: none;
  width: ${(p) => p.$w}px;
  height: 88px;
  padding-left: 46px;
  padding-right: 28px;
  display: flex;
  align-items: center;
  border-right: 2px solid #3c4043;
`;

const DownloadName = styled.div<{ $tight?: boolean }>`
  margin-left: ${(p) => (p.$tight ? 22 : 29)}px;
  color: #8c8c8c;
  font-size: 27px;
  letter-spacing: ${(p) => (p.$tight ? -1.4 : 0.4)}px;
  white-space: nowrap;
`;

const DownloadCaret = styled.div`
  margin-left: auto;
  display: flex;
`;

const ShowAll = styled.div`
  flex: none;
  width: 154px;
  height: 63px;
  margin-left: auto;
  display: flex;
  align-items: center;
  justify-content: center;
  border: 2px solid #3c4043;
  border-radius: 8px;
  color: #8ab4f8;
  font-size: 23.5px;
`;
